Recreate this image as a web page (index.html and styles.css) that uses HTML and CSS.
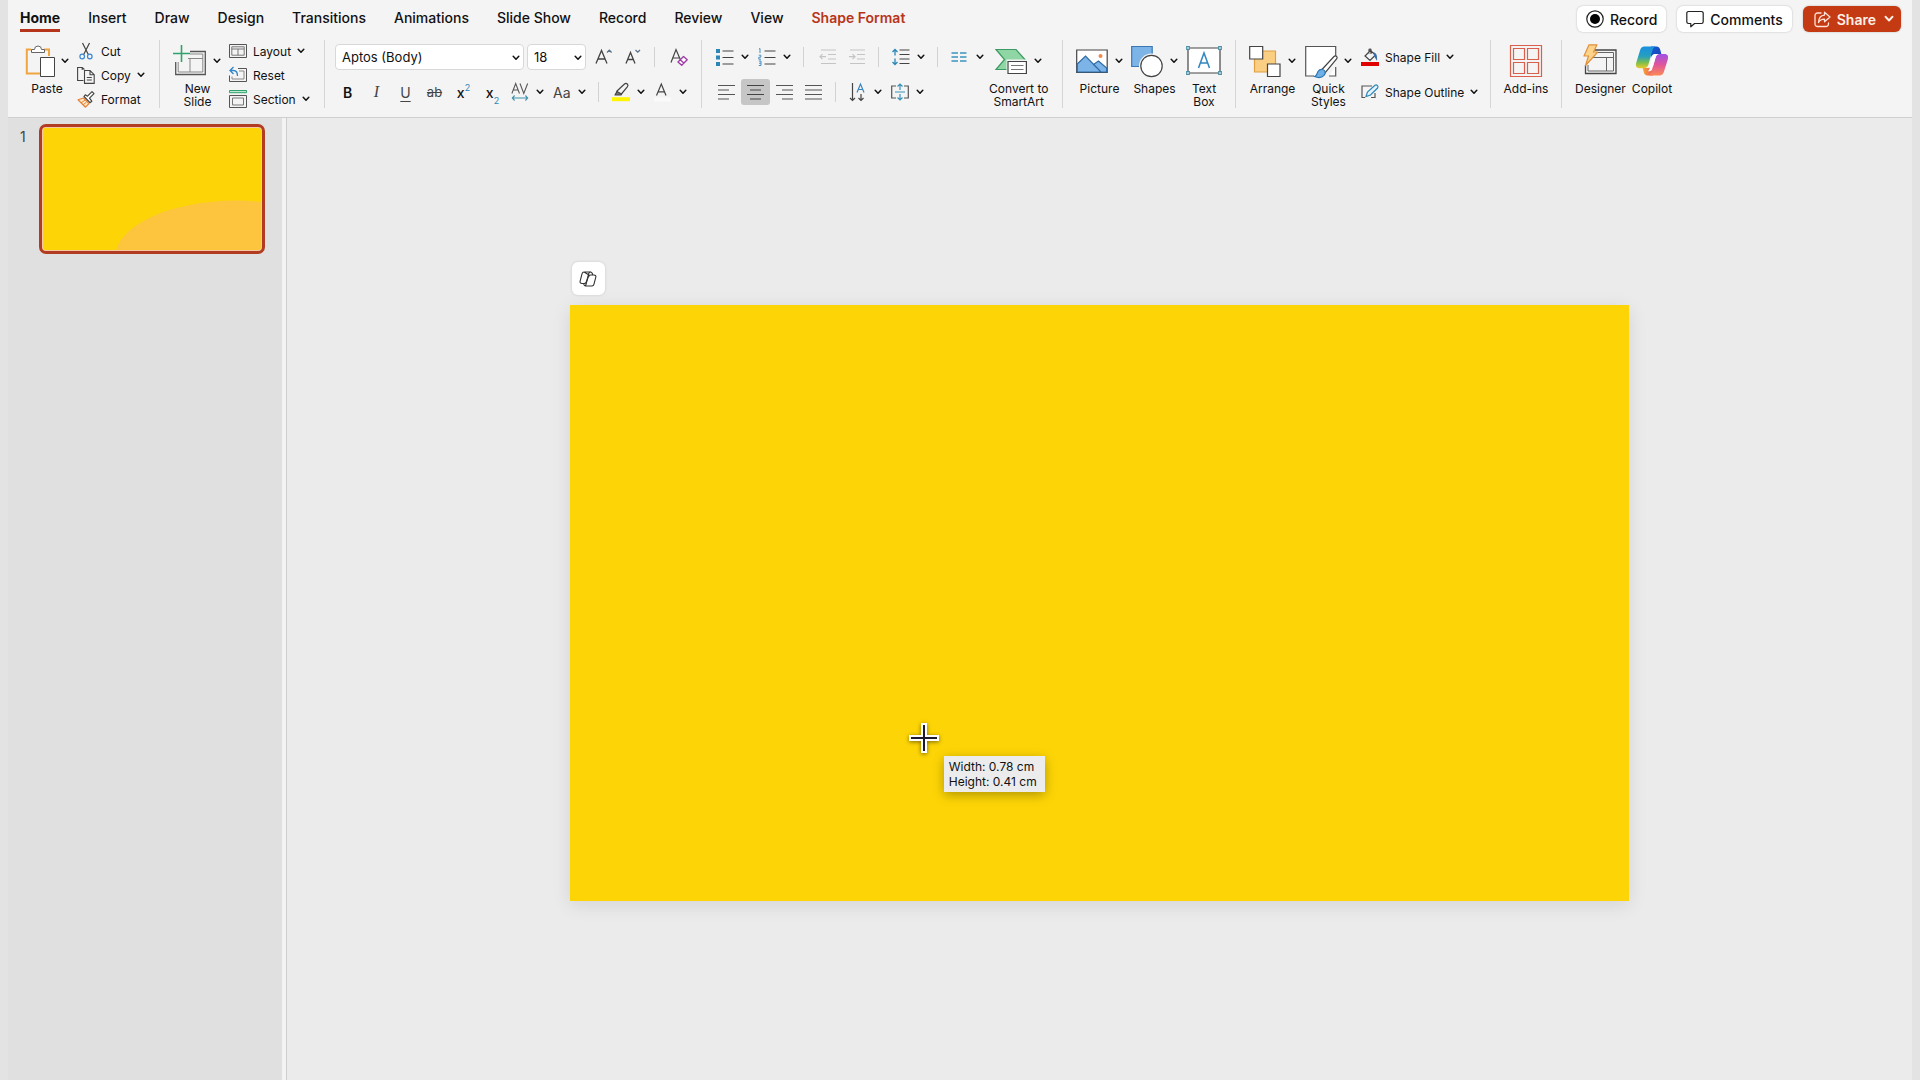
FILE: index.html
```html
<!DOCTYPE html>
<html lang="en">
  <head>
    <meta charset="utf-8">
    <title>Presentation</title>
    <link rel="stylesheet" href="styles.css">
  </head>
  <body>
    <svg width="0" height="0" class="defs" aria-hidden="true">
      <symbol id="chev" viewBox="0 0 8 6">
        <path d="M1.2 1.2 4 4.2 6.8 1.2" fill="none" stroke="currentColor" stroke-width="1.5" stroke-linecap="round" stroke-linejoin="round"/>
      </symbol>
    </svg>

    <header class="top">
      <nav class="tabs">
        <button class="tab active">Home</button>
        <button class="tab">Insert</button>
        <button class="tab">Draw</button>
        <button class="tab">Design</button>
        <button class="tab">Transitions</button>
        <button class="tab">Animations</button>
        <button class="tab">Slide Show</button>
        <button class="tab">Record</button>
        <button class="tab">Review</button>
        <button class="tab">View</button>
        <button class="tab context">Shape Format</button>
      </nav>
      <div class="actions">
        <button class="pill">
          <svg width="18" height="18" viewBox="0 0 18 18"><circle cx="9" cy="9" r="8.2" fill="none" stroke="#222" stroke-width="1.2"/><circle cx="9" cy="9" r="5" fill="#000"/></svg>
          Record
        </button>
        <button class="pill">
          <svg width="18" height="18" viewBox="0 0 18 18" fill="none" stroke="#222" stroke-width="1.2" stroke-linejoin="round"><path d="M2.5 1.5h13a1.7 1.7 0 0 1 1.7 1.7v8.6a1.7 1.7 0 0 1-1.7 1.7H8.6L4.8 16.8V13.5H2.5A1.7 1.7 0 0 1 .8 11.8V3.2a1.7 1.7 0 0 1 1.7-1.7z"/></svg>
          Comments
        </button>
        <button class="pill share">
          <svg width="17" height="17" viewBox="0 0 17 17" fill="none" stroke="#ffe3d8" stroke-width="1.3" stroke-linejoin="round" stroke-linecap="round"><path d="M7 2H3.5A2.5 2.5 0 0 0 1 4.5v8.5A2.5 2.5 0 0 0 3.5 15.5h8.5a2.5 2.5 0 0 0 2.5-2.5v-1"/><path d="M10.5 1.2 16 6l-5.5 4.8V8.2C7.5 8.2 5.5 9.4 4.5 11.6 4.6 7.4 6.8 4.4 10.5 4.1z"/></svg>
          Share
          <svg class="chev chev-lg"><use href="#chev"/></svg>
        </button>
      </div>
    </header>

    <div class="ribbon">
      <section class="group clipboard">
        <button class="big">
          <span class="big-icon">
            <svg width="31" height="34" viewBox="0 0 31 34" fill="none">
              <path d="M6 5.5H1.8V29.5H15M19 5.5h5V12" stroke="#f0a540" stroke-width="2"/>
              <path d="M6.5 8.5V5.5h3a3.5 3.5 0 0 1 7 0h3v3z" fill="#fff" stroke="#666"/>
              <path d="M15.5 13.5h14v19h-14z" fill="#fff" stroke="#444"/>
            </svg>
            <svg class="chev"><use href="#chev"/></svg>
          </span>
          Paste
        </button>
        <div class="stack">
          <button class="small">
            <svg width="18" height="18" viewBox="0 0 18 18" fill="none" stroke-width="1.2"><path d="M5.5 1 11.3 12.5M12.5 1 6.7 12.5" stroke="#444"/><circle cx="5.2" cy="14.5" r="2.3" stroke="#3a86d0"/><circle cx="12.8" cy="14.5" r="2.3" stroke="#3a86d0"/></svg>
            Cut
          </button>
          <button class="small">
            <svg width="18" height="18" viewBox="0 0 18 18" fill="none" stroke="#444" stroke-width="1.1"><path d="M6.5 14.5H.6V1.5h4.6l2.2 2M5.2 1.5v2.5"/><path d="M7.5 4.5h5.5l4.2 4.2v8.7H7.5zM13 4.5v4.2h4.2M9.8 11.5h5M9.8 14h5"/></svg>
            Copy
            <svg class="chev"><use href="#chev"/></svg>
          </button>
          <button class="small">
            <svg width="18" height="18" viewBox="0 0 18 18" fill="none" stroke-linejoin="round"><path d="M1 9.8 6.5 8 12 13.5 8.5 17.2z" fill="#ffe6c4" stroke="#e5833a" stroke-width="1.2"/><path d="M4 13l4-3M6 15l3.5-3" stroke="#e5833a"/><path d="M7 6.5l6 6.2 1.8-1.5-2.3-3 4.5-4.5-2-2-4.500 4.500L8.300 4.800z" fill="#fff" stroke="#444" stroke-width="1.2"/></svg>
            Format
          </button>
        </div>
      </section>

      <section class="group slides">
        <button class="big">
          <span class="big-icon">
            <svg width="32" height="34" viewBox="0 0 32 34" fill="none">
              <path d="M16 7.500h15.300V30.500H1.700V18" stroke="#555" stroke-width="1.3"/>
              <path d="M16 10h12.800V28H4.200V18M14 14.500h15M16 14.500V28" stroke="#888"/>
              <path d="M7.500 1v17M-1 9.500H16" stroke="#2fa36c" stroke-width="1.600"/>
            </svg>
            <svg class="chev"><use href="#chev"/></svg>
          </span>
          New<br>Slide
        </button>
        <div class="stack">
          <button class="small">
            <svg width="18" height="18" viewBox="0 0 18 18" fill="none" stroke="#555"><path d="M.5 2.5h17v13H.5z"/><path d="M2.8 4.8h12.4v8.4H2.8zM2.8 7h12.4M9 7v6.2" stroke="#777"/></svg>
            Layout
            <svg class="chev"><use href="#chev"/></svg>
          </button>
          <button class="small">
            <svg width="18" height="18" viewBox="0 0 18 18" fill="none" stroke="#555"><path d="M9 2.5h8.5v13H.5V9.5"/><path d="M10 5h5v8H3v-2.5" stroke="#888"/><path d="M4.500 1 1 4.500 4.500 8M1 4.500h3.500c3 0 4 2 4 5.500" stroke="#2f86c9" stroke-width="1.3"/></svg>
            Reset
          </button>
          <button class="small">
            <svg width="18" height="18" viewBox="0 0 18 18" fill="none" stroke="#555"><path d="M.5.5h17v2.2H.5z" fill="#bfe8d2" stroke="#2fa36c"/><path d="M.5 5.5h17v12H.5z"/><path d="M3.5 8h11v7h-11z" stroke="#777"/></svg>
            Section
            <svg class="chev"><use href="#chev"/></svg>
          </button>
        </div>
      </section>

      <section class="group font">
        <div class="rows">
          <div class="row font-pick">
            <span class="pick pick-font">
              <select aria-label="Font"><option>Aptos (Body)</option></select>
              <svg class="chev"><use href="#chev"/></svg>
            </span>
            <span class="pick pick-size">
              <select aria-label="Font size"><option>18</option></select>
              <svg class="chev"><use href="#chev"/></svg>
            </span>
            <button class="tool" aria-label="Increase font size">
              <svg width="18" height="18" viewBox="0 0 18 18" fill="none" stroke="#444" stroke-width="1.3"><path d="M1 15.5 6.5 2.5 12 15.5M3 11h7"/><path d="M12 4.5 14.3 2.2 16.6 4.5" stroke="#5a7184"/></svg>
            </button>
            <button class="tool" aria-label="Decrease font size">
              <svg width="18" height="18" viewBox="0 0 18 18" fill="none" stroke="#444" stroke-width="1.3"><path d="M2 15.5 6.5 4.5 11 15.5M3.8 11.5h5.500"/><path d="M11.500 2 13.800 4.200 16 2" stroke="#5a7184"/></svg>
            </button>
            <span class="divider"></span>
            <button class="tool" aria-label="Clear formatting">
              <svg width="18" height="18" viewBox="0 0 18 18" fill="none" stroke="#444" stroke-width="1.2"><path d="M1 14.500 6 1.500 10.500 12M3 10h6"/><path d="M8 14 13.500 8.500 17.200 11.700 11.700 17.200zM10.200 11.800l3.600 3.200" fill="#fff" stroke="#a03aa8" stroke-width="1.4" stroke-linejoin="round"/></svg>
            </button>
          </div>
          <div class="row">
            <button class="tool bold">B</button>
            <button class="tool italic">I</button>
            <button class="tool underline">U</button>
            <button class="tool strike">ab</button>
            <button class="tool script">x<sup>2</sup></button>
            <button class="tool script">x<sub>2</sub></button>
            <button class="tool-menu" aria-label="Character spacing">
              <svg width="18" height="20" viewBox="0 0 20 20" preserveAspectRatio="none" fill="none" stroke="#555" stroke-width="1.2"><path d="M1 11.5 5.2 1.5 9.4 11.5M2.6 8h5.2M10 1.5l4.2 10 4.3-10"/><path d="M1.5 16h17M4 13.5 1.5 16 4 18.5M16 13.5l2.5 2.5-2.5 2.5" stroke="#3f92a8"/></svg>
              <svg class="chev"><use href="#chev"/></svg>
            </button>
            <button class="tool-menu case">
              Aa
              <svg class="chev"><use href="#chev"/></svg>
            </button>
            <span class="divider"></span>
            <button class="tool-menu" aria-label="Highlight colour">
              <svg width="18" height="20" viewBox="0 0 18 20" fill="none" stroke="#444" stroke-width="1.2" stroke-linejoin="round"><path d="M5 9 12.5 2a1.9 1.9 0 0 1 2.8 2.8L9 12.5H5z"/><path d="M5 9.5 3 13h6l.5-1z" fill="#777"/><path d="M0 15.2h18v4H0z" fill="#fff500" stroke="none"/></svg>
              <svg class="chev"><use href="#chev"/></svg>
            </button>
            <button class="tool-menu" aria-label="Font colour">
              <svg width="18" height="20" viewBox="0 0 18 20" fill="none" stroke="#444" stroke-width="1.2"><path d="M2.5 13.5 7.3 2 12 13.5M4.200 9.800h6.200"/><path d="M0 15.5h17v4H0z" fill="#fafafa" stroke="none"/></svg>
              <svg class="chev"><use href="#chev"/></svg>
            </button>
          </div>
        </div>
      </section>

      <section class="group paragraph">
        <div class="rows">
          <div class="row">
            <button class="tool-menu" aria-label="Bullets">
              <svg width="18" height="18" viewBox="0 0 18 18"><path d="M0 1h4v4H0zM0 7.500h4v4H0zM0 14h4v4H0z" fill="#2a87b8"/><path d="M6.500 3h11M6.500 9.500h11M6.500 16h11" stroke="#444" stroke-width="1.2"/></svg>
              <svg class="chev"><use href="#chev"/></svg>
            </button>
            <button class="tool-menu" aria-label="Numbering">
              <svg width="18" height="18" viewBox="0 0 18 18" fill="none"><path d="M1 1l1-.5V5M.8 7.200h2v2h-2v2h2.200M.8 13h2.200v4.500H.8M1 15.200h2" stroke="#4a8fc2"/><path d="M6.500 3h11M6.500 9.500h11M6.500 16h11" stroke="#444" stroke-width="1.2"/></svg>
              <svg class="chev"><use href="#chev"/></svg>
            </button>
            <span class="divider"></span>
            <button class="tool" disabled aria-label="Decrease indent">
              <svg width="18" height="16" viewBox="0 0 18 16" fill="none" stroke="#c4c4c4" stroke-width="1.2"><path d="M2 1h15M9 5.5h8M9 10h8M2 14.5h15M7 7.7H1M3.500 5.200 1 7.700l2.500 2.500"/></svg>
            </button>
            <button class="tool" disabled aria-label="Increase indent">
              <svg width="18" height="16" viewBox="0 0 18 16" fill="none" stroke="#c4c4c4" stroke-width="1.2"><path d="M2 1h15M9 5.5h8M9 10h8M2 14.5h15M1 7.7h6M4.500 5.200 7 7.700l-2.500 2.500"/></svg>
            </button>
            <span class="divider"></span>
            <button class="tool-menu" aria-label="Line spacing">
              <svg width="18" height="18" viewBox="0 0 18 18" fill="none"><path d="M3 1.5v6M3 10.5v6M.5 4 3 1.5 5.5 4M.5 14 3 16.5 5.5 14" stroke="#2a87b8" stroke-width="1.3"/><path d="M7.5 2h10M7.5 6.5h10M7.5 11h10M7.5 15.5h10" stroke="#444" stroke-width="1.2"/></svg>
              <svg class="chev"><use href="#chev"/></svg>
            </button>
            <span class="divider"></span>
            <button class="tool-menu" aria-label="Columns">
              <svg width="18" height="18" viewBox="0 0 18 18"><path d="M.5 5h6.500M.5 9h6.500M.5 13h6.500M9 5h6.500M9 9h6.500M9 13h6.500" stroke="#3a92c0" stroke-width="1.3"/></svg>
              <svg class="chev"><use href="#chev"/></svg>
            </button>
          </div>
          <div class="row">
            <button class="tool" aria-label="Align left">
              <svg width="17" height="16" viewBox="0 0 17 16" stroke="#555" stroke-width="1.2"><path d="M0 1.5h17M0 6h11M0 10.5h17M0 15h11"/></svg>
            </button>
            <button class="tool pressed" aria-label="Align centre" aria-pressed="true">
              <svg width="17" height="16" viewBox="0 0 17 16" stroke="#444" stroke-width="1.2"><path d="M0 1.5h17M3 6h11M0 10.5h17M3 15h11"/></svg>
            </button>
            <button class="tool" aria-label="Align right">
              <svg width="17" height="16" viewBox="0 0 17 16" stroke="#555" stroke-width="1.2"><path d="M0 1.5h17M6 6h11M0 10.5h17M6 15h11"/></svg>
            </button>
            <button class="tool" aria-label="Justify">
              <svg width="17" height="16" viewBox="0 0 17 16" stroke="#555" stroke-width="1.2"><path d="M0 1.5h17M0 6h17M0 10.5h17M0 15h17"/></svg>
            </button>
            <span class="divider"></span>
            <button class="tool-menu" aria-label="Text direction">
              <svg width="18" height="20" viewBox="0 0 18 20" fill="none" stroke="#444" stroke-width="1.2"><path d="M3.5 1v17.5M1 16l2.5 2.5L6 16M12 12v6.5M9.5 16l2.5 2.5 2.5-2.5"/><path d="M8 10.5 11.5 2 15 10.5M9.3 7.5h4.4" stroke="#3a86c0"/></svg>
              <svg class="chev"><use href="#chev"/></svg>
            </button>
            <button class="tool-menu" aria-label="Align text">
              <svg width="18" height="18" viewBox="0 0 18 18" fill="none" stroke="#555" stroke-width="1.2"><path d="M5 3H.7v12H5M13 3h4.300v12H13"/><path d="M9 1v6M9 11v6M6.500 3.500 9 1l2.500 2.500M6.500 14.500 9 17l2.500-2.500M4 9h10" stroke="#3a92b8"/></svg>
              <svg class="chev"><use href="#chev"/></svg>
            </button>
          </div>
        </div>
        <button class="big">
          <span class="big-icon">
            <svg width="32" height="34" viewBox="0 0 32 34" stroke-width="1.2">
              <path d="M1 5.5h20l9 10-9 10H1l8.5-10z" fill="#8fd6a4" stroke="#3c9a63"/>
              <path d="M11.5 15.5H32V31H11.5z" fill="#f4f4f4"/>
              <path d="M13 17.5h18.4v12H13z" fill="#fff" stroke="#444"/>
              <path d="M16 21.5h12.5M16 25.5h12.5" stroke="#777"/>
            </svg>
            <svg class="chev"><use href="#chev"/></svg>
          </span>
          Convert to<br>SmartArt
        </button>
      </section>

      <section class="group insert">
        <button class="big">
          <span class="big-icon">
            <svg width="32" height="34" viewBox="0 0 32 34" stroke-width="1.2">
              <path d="M.7 6h30.5v22.5H.7z" fill="#fff" stroke="#444"/>
              <path d="M1.3 20 9.5 12 25 28H1.3zM17.5 20.5 22.5 17 30.6 24v4H25z" fill="#7db4e8" stroke="#2f6ca5"/>
              <circle cx="24.5" cy="12" r="2" fill="#f0894a"/>
            </svg>
            <svg class="chev"><use href="#chev"/></svg>
          </span>
          Picture
        </button>
        <button class="big">
          <span class="big-icon">
            <svg width="32" height="34" viewBox="0 0 32 34" stroke-width="1.2">
              <path d="M.7 2.500h20.500v20H.7z" fill="#7db4e8" stroke="#3a78b5"/>
              <circle cx="20.5" cy="22" r="12.5" fill="#f4f4f4"/>
              <circle cx="20.5" cy="22" r="10.7" fill="#fff" stroke="#444"/>
            </svg>
            <svg class="chev"><use href="#chev"/></svg>
          </span>
          Shapes
        </button>
        <button class="big">
          <span class="big-icon">
            <svg width="36" height="34" viewBox="0 0 36 34" fill="none" stroke-width="1.2">
              <path d="M2 4h32v25H2z" fill="#fff" stroke="#444"/>
              <path d="M.7 2.7h2.600v2.600H.7zM32.700 2.700h2.600v2.600h-2.600zM.7 27.700h2.600v2.600H.7zM32.700 27.700h2.600v2.600h-2.600z" fill="#fff" stroke="#4a90a4"/>
              <path d="M12.500 24 18 9l5.500 15M14.200 19h7.600" stroke="#2f86c0" stroke-width="1.5"/>
            </svg>
          </span>
          Text<br>Box
        </button>
      </section>

      <section class="group drawing">
        <button class="big">
          <span class="big-icon">
            <svg width="32" height="34" viewBox="0 0 32 34" stroke-width="1.2">
              <path d="M5.5 7h21v21h-21z" fill="#fbcf83" stroke="#e0a040"/>
              <path d="M.7 2.500h13v12.500H.7zM18.500 20h12.500v12.500H18.500z" fill="#fff" stroke="#444"/>
            </svg>
            <svg class="chev"><use href="#chev"/></svg>
          </span>
          Arrange
        </button>
        <button class="big">
          <span class="big-icon">
            <svg width="32" height="34" viewBox="0 0 32 34" stroke-width="1.2">
              <path d="M9 32H.7V2.500h30V14M30.700 23v9H24" fill="#fff" stroke="#555"/>
              <path d="M16.500 26 29 12.500c1.500-1.600 4 .2 2.800 2.200L20 29z" fill="#fff" stroke="#444"/>
              <path d="M17.500 25.500c3 .5 3.500 3.500 1.500 5.800-2 2.300-6 2.700-9.500 1.200 2.800-1 2.200-2.800 3.500-5 1-1.600 2.500-2.200 4.500-2z" fill="#6fb1e6" stroke="#2f76b0"/>
            </svg>
            <svg class="chev"><use href="#chev"/></svg>
          </span>
          Quick<br>Styles
        </button>
        <div class="rows">
          <button class="small row">
            <svg width="18" height="18" viewBox="0 0 18 18" fill="none" stroke="#444" stroke-width="1.2"><path d="M9.500 2.500 4 8l5 4.500L14.500 7zM8 5.500V1.800c0-1 2-1 2 0V6"/><path d="M13 5c2 .5 2.500 2.500 2.500 6-1-1.500-2-3-2-4z" fill="#3a6ea8" stroke="#3a6ea8"/><path d="M0 14h18v4H0z" fill="#e00000" stroke="none"/></svg>
            Shape Fill
            <svg class="chev"><use href="#chev"/></svg>
          </button>
          <button class="small row">
            <svg width="18" height="18" viewBox="0 0 18 18" fill="none" stroke-width="1.2"><path d="M11 3H1v11.500h3M14 10v4.500h-4" stroke="#555"/><path d="M5 13.500l1.500-4.500L14 2.300a1.900 1.900 0 0 1 2.600 2.700L9.500 12z" fill="#e4f3fb" stroke="#2f86b8"/></svg>
            Shape Outline
            <svg class="chev"><use href="#chev"/></svg>
          </button>
        </div>
      </section>

      <section class="group addins">
        <button class="big">
          <span class="big-icon">
            <svg width="34" height="34" viewBox="0 0 34 34" fill="none" stroke="#d9604c" stroke-width="1.2">
              <path d="M1.500 1.500h31v31h-31z"/>
              <path d="M4.500 4.500h11v11h-11zM18.500 4.500h11v11h-11zM4.500 18.500h11v11h-11zM18.500 18.500h11v11h-11z"/>
            </svg>
          </span>
          Add-ins
        </button>
      </section>

      <section class="group smart">
        <button class="big">
          <span class="big-icon">
            <svg width="34" height="34" viewBox="0 0 34 34" fill="none">
              <path d="M12 6h21v23.500H2.500V21" stroke="#444" stroke-width="1.3"/>
              <path d="M12 8.500h18.500V27H5v-6M10 13.500h20.500M23.500 13.500V27" stroke="#666"/>
              <path d="M6 .8h8L10.500 8h4.300L2.500 21.500 5.500 12H1z" fill="#fbd38a" stroke="#e0913c" stroke-linejoin="round" stroke-width="1.2"/>
            </svg>
          </span>
          Designer
        </button>
        <button class="big">
          <span class="big-icon">
            <svg width="34" height="34" viewBox="0 0 34 34">
              <defs>
                <linearGradient id="cpLeft" x1="0" y1="0" x2="0" y2="1"><stop offset="0" stop-color="#1a8fe0"/><stop offset=".45" stop-color="#259fc0"/><stop offset=".75" stop-color="#7fbf4a"/><stop offset="1" stop-color="#ecc92a"/></linearGradient>
                <linearGradient id="cpRight" x1="0" y1="0" x2="0" y2="1"><stop offset="0" stop-color="#a050e8"/><stop offset=".5" stop-color="#e0559a"/><stop offset="1" stop-color="#fb8a55"/></linearGradient>
                <linearGradient id="cpTop" x1="0" y1="0" x2="1" y2="1"><stop offset="0" stop-color="#0f5fd0"/><stop offset="1" stop-color="#1f3fb8"/></linearGradient>
                <linearGradient id="cpBottom" x1="0" y1="0" x2="1" y2="0"><stop offset="0" stop-color="#f5a52e"/><stop offset="1" stop-color="#f0566a"/></linearGradient>
              </defs>
              <path d="M16 2.500h5.500c2.200 0 3.200 1.200 3.800 3.500l1 4h-5.500c-3 0-4.200 1.500-5 4z" fill="url(#cpTop)"/>
              <path d="M18 31.500h-5.500c-2.200 0-3.200-1.200-3.800-3.500l-1-4h5.500c3 0 4.200-1.500 5-4z" fill="url(#cpBottom)"/>
              <path d="M9.500 2.500h11c-2 .8-2.800 2.700-3.500 5.200l-3.500 12.500c-.8 2.800-2 4-4.500 4H4.500c-3.200 0-4.200-2.200-3.200-5.700L5 6.500c.8-2.800 2-4 4.500-4z" fill="url(#cpLeft)"/>
              <path d="M24.500 31.500h-11c2-.8 2.800-2.700 3.500-5.200l3.500-12.300c.8-2.800 2-4 4.500-4h4.500c3.200 0 4.200 2.200 3.200 5.700L29 27.500c-.8 2.800-2 4-4.500 4z" fill="url(#cpRight)"/>
              <path d="M17.800 11.500c.6-1.200 1.600-1.500 3.200-1.500h2c-1.300.6-2 1.800-2.500 3.600l-3.300 11.500c-.5 1.600-1.300 2.100-3 2.100h-1.500c1-.5 1.500-1.500 2-3z" fill="#fff"/>
            </svg>
          </span>
          Copilot
        </button>
      </section>
    </div>

    <main class="work">
      <aside class="thumbs">
        <span class="thumb-no">1</span>
        <button class="thumb" aria-label="Slide 1">
          <svg viewBox="0 0 217 121" preserveAspectRatio="none"><ellipse cx="192" cy="128" rx="120" ry="56" fill="#fdc53e"/></svg>
        </button>
      </aside>
      <div class="canvas">
        <div class="stage">
          <button class="copilot-chip" aria-label="Copilot">
            <svg width="18" height="16" viewBox="0 0 18 16" fill="none" stroke="#333" stroke-width="1.1" stroke-linejoin="round"><path d="M5 1h6.500c1 0 1.500.6 1.800 1.500l.4 1.500M10 4 7.300 11c-.3 1-.9 1.500-2 1.500H3C1.300 12.500.7 11.400 1.200 9.800L3 2.800C3.300 1.600 4 1 5 1z"/><path d="M13 15H6.500c-1 0-1.400-.6-1.600-1.500l-.2-1M13 15c1 0 1.700-.6 2-1.800l1.800-7C17.200 4.800 16.500 4 15 4h-3.500c-1 0-1.400.5-1.700 1.500M11.500 1C10.500 1 10 1.600 9.700 2.500L7 13.500c-.2.9-.5 1.300-1 1.500"/></svg>
          </button>
          <div class="slide">
            <svg class="crosshair" width="34" height="34" viewBox="0 0 34 34"><path d="M17 2v30M2 17h30" stroke="#fff" stroke-width="6"/><path d="M17 4v26M4 17h26" stroke="#1d1a2e" stroke-width="2"/></svg>
            <div class="size-tip">Width: 0.78 cm<br>Height: 0.41 cm</div>
          </div>
        </div>
      </div>
    </main>
  </body>
</html>
```

FILE: styles.css
```css
* {
  box-sizing: border-box;
}
body {
  margin: 0;
  padding: 0 8px;
  min-height: 100vh;
  display: flex;
  flex-direction: column;
  background: #e3e3e3;
  color: #111;
  font-family: Inter, "Liberation Sans", sans-serif;
  font-size: 12px;
}
button {
  border: none;
  background: none;
  padding: 0;
  margin: 0;
  color: inherit;
  font: inherit;
}
svg {
  display: block;
  flex: none;
  overflow: visible;
}
.defs {
  position: absolute;
}
.chev {
  width: 8px;
  height: 6px;
}
.chev-lg {
  width: 10px;
  height: 8px;
}

/* Tabs and top right buttons */
.top {
  height: 40px;
  display: flex;
  justify-content: space-between;
  align-items: flex-start;
  padding: 0 11px 0 12px;
  background: #f4f4f4;
}
.tabs {
  display: flex;
  gap: 28px;
}
.tab {
  height: 32px;
  padding-top: 5px;
  border-bottom: 3px solid transparent;
  font-size: 14px;
  font-weight: 500;
  white-space: nowrap;
}
.tab.active {
  font-weight: 700;
  border-bottom-color: #b7351a;
}
.tab.context {
  font-weight: 600;
  color: #b7351a;
}
.actions {
  display: flex;
  gap: 11px;
  padding-top: 6px;
}
.pill {
  height: 26px;
  display: flex;
  align-items: center;
  gap: 6px;
  padding: 0 9px;
  border-radius: 6px;
  background: #fff;
  box-shadow: 0 0 2px rgba(0, 0, 0, 0.25);
  font-size: 14px;
  font-weight: 500;
}
.pill.share {
  padding: 0 7px 0 11px;
  background: #c43a12;
  color: #fff0e8;
  font-weight: 600;
}
.share .chev {
  margin-left: 2px;
}

/* Ribbon */
.ribbon {
  display: flex;
  height: 78px;
  padding-bottom: 9px;
  background: #f4f4f4;
  border-bottom: 1px solid #cfcfcf;
}
.group {
  flex: none;
  display: flex;
  align-items: flex-start;
  height: 68px;
  border-right: 1px solid #d6d6d6;
}
.group:last-child {
  border-right: none;
}
.clipboard {
  width: 152px;
  padding-left: 17px;
  gap: 8px;
}
.clipboard .big-icon {
  gap: 5px;
}
.slides {
  width: 165px;
  padding-left: 14px;
  gap: 8px;
}
.font {
  width: 377px;
  padding-left: 8px;
}
.paragraph {
  width: 361px;
  padding-left: 10px;
}
.insert {
  width: 173px;
  padding-left: 13px;
  gap: 8px;
}
.drawing {
  width: 255px;
  padding-left: 13px;
  gap: 9px;
}
.addins {
  width: 71px;
  justify-content: center;
}
.smart {
  padding-left: 13px;
  gap: 6px;
}

.big {
  display: flex;
  flex-direction: column;
  align-items: center;
  line-height: 13px;
  white-space: nowrap;
}
.big-icon {
  height: 42px;
  display: flex;
  align-items: center;
  gap: 7px;
}
.stack {
  display: flex;
  flex-direction: column;
  gap: 2px;
}
.small {
  height: 22px;
  display: flex;
  align-items: center;
  gap: 6px;
  white-space: nowrap;
}
.rows .small {
  height: 26px;
}

.rows {
  display: flex;
  flex-direction: column;
  gap: 9px;
  padding-top: 4px;
}
.row {
  height: 26px;
  display: flex;
  align-items: center;
}
.font-pick {
  padding-left: 2px;
}
.pick {
  position: relative;
  margin-right: 3px;
}
.pick-font {
  width: 189px;
}
.pick-size {
  width: 59px;
}
.pick select {
  appearance: none;
  width: 100%;
  height: 26px;
  padding: 0 6px;
  border: 1px solid #d8d8d8;
  border-radius: 4px;
  background: #fff;
  color: #111;
  font: inherit;
  font-size: 13px;
}
.pick .chev {
  position: absolute;
  right: 4px;
  top: 11px;
  pointer-events: none;
}
.tool {
  width: 29px;
  height: 26px;
  display: flex;
  align-items: center;
  justify-content: center;
  font-size: 14px;
  color: #444;
}
.tool.pressed {
  border-radius: 3px;
  background: #c6c6c6;
}
.bold {
  font-weight: 600;
  color: #111;
}
.italic {
  font-family: "Liberation Serif", serif;
  font-size: 16px;
  font-style: italic;
}
.underline {
  text-decoration: underline;
  text-underline-offset: 3px;
}
.strike {
  font-size: 13px;
  text-decoration: line-through;
}
.script {
  font-weight: 500;
  color: #111;
}
.script sup,
.script sub {
  font-size: 9px;
  font-weight: 400;
  line-height: 9px;
  color: #2f86b8;
}
.script sup {
  align-self: flex-start;
  padding-top: 4px;
}
.script sub {
  align-self: flex-end;
}
.tool-menu {
  width: 42px;
  height: 26px;
  display: flex;
  align-items: center;
  gap: 7px;
  padding-left: 4px;
}
.case {
  font-size: 14px;
  color: #444;
}
.tool-menu .chev {
  color: #111;
}
.divider {
  width: 1px;
  height: 20px;
  margin: 0 9px 0 7px;
  background: #d2d2d2;
}

/* Work area */
.work {
  flex: 1;
  display: flex;
}
.thumbs {
  flex: none;
  width: 278px;
  display: flex;
  align-items: flex-start;
  gap: 12px;
  padding: 6px 17px 0 12px;
  background: #e0e0e0;
  border-right: 4px solid #f3f3f3;
}
.thumb-no {
  width: 7px;
  padding-top: 4px;
  font-size: 14px;
  line-height: 18px;
  color: #444;
}
.thumb {
  flex: 1;
  aspect-ratio: 226 / 130;
  border: 3px solid #b23c22;
  border-radius: 7px;
  padding: 1px;
  background: #f6c9a0;
}
.thumb svg {
  width: 100%;
  height: 100%;
  border-radius: 3px;
  overflow: hidden;
  background: #fdd506;
}
.canvas {
  flex: 1;
  padding: 144px 0;
  border-left: 1px solid #cfcfcf;
  background: #ebebeb;
}
.stage {
  width: 65.2%;
  margin: 0 auto;
}
.copilot-chip {
  width: 33px;
  height: 33px;
  margin: 0 0 10px 2px;
  display: flex;
  align-items: center;
  justify-content: center;
  border-radius: 6px;
  background: #fff;
  box-shadow: 0 0 3px rgba(0, 0, 0, 0.15);
}
.slide {
  position: relative;
  aspect-ratio: 16 / 9;
  background: #fdd506;
  box-shadow: 0 4px 18px rgba(0, 0, 0, 0.1);
}
.crosshair {
  position: absolute;
  left: 337px;
  top: 416px;
  filter: drop-shadow(0 1px 2px rgba(0, 0, 0, 0.5));
}
.size-tip {
  position: absolute;
  left: 374px;
  top: 451px;
  padding: 3px 8px 3px 5px;
  background: #ececec;
  box-shadow: 0 3px 12px rgba(0, 0, 0, 0.3);
  font-size: 12px;
  line-height: 15px;
  white-space: nowrap;
}
```
